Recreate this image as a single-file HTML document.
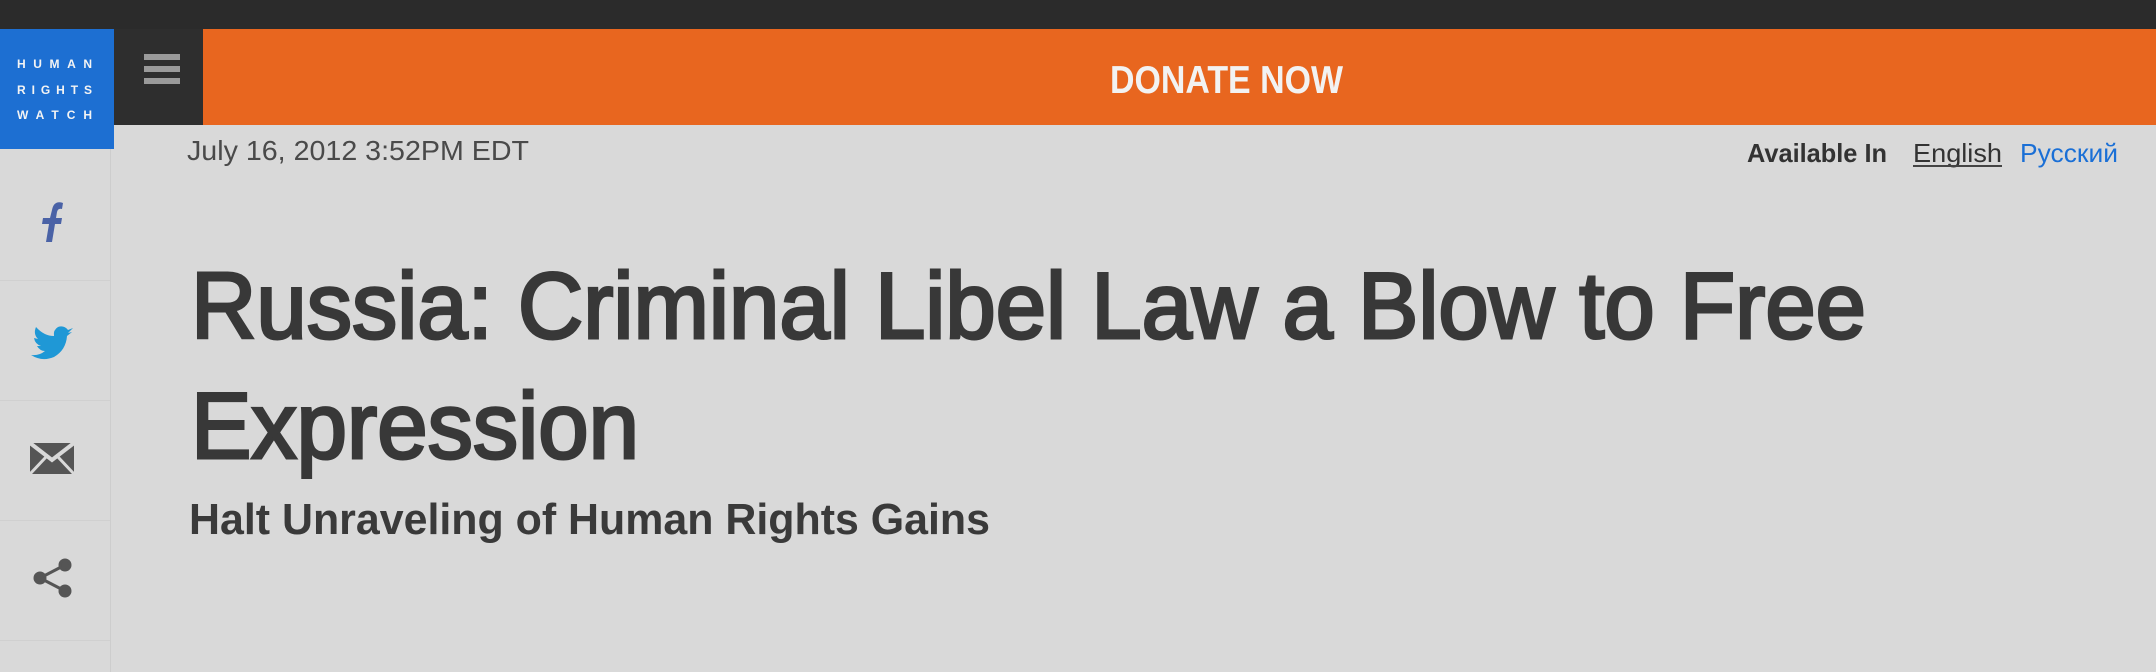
<!DOCTYPE html>
<html><head><meta charset="utf-8"><style>
html,body{margin:0;padding:0;}
body{width:2156px;height:672px;background:#d9d9d9;position:relative;overflow:hidden;font-family:"Liberation Sans",sans-serif;}
.a{position:absolute;}
svg{position:absolute;left:0;top:0;}
</style></head><body>
<div class="a" style="left:0;top:0;width:2156px;height:29px;background:#2b2b2b"></div>
<div class="a" style="left:0;top:29px;width:114px;height:120px;background:#1d6fd2"></div>
<div class="a" style="left:114px;top:29px;width:89px;height:96px;background:#2e2e2e"></div>
<div class="a" style="left:203px;top:29px;width:1953px;height:96px;background:#e8661f"></div>
<div class="a" style="left:144px;top:54px;width:36px;height:6px;background:#9a9a9a"></div>
<div class="a" style="left:144px;top:66px;width:36px;height:6px;background:#9a9a9a"></div>
<div class="a" style="left:144px;top:78px;width:36px;height:6px;background:#9a9a9a"></div>
<div class="a" style="left:110px;top:149px;width:1px;height:523px;background:#cdcdcd"></div>
<div class="a" style="left:0;top:280px;width:110px;height:1px;background:#d0d0d0"></div>
<div class="a" style="left:0;top:400px;width:110px;height:1px;background:#d0d0d0"></div>
<div class="a" style="left:0;top:520px;width:110px;height:1px;background:#d0d0d0"></div>
<div class="a" style="left:0;top:640px;width:110px;height:1px;background:#d0d0d0"></div>
<svg width="2156" height="672" xmlns="http://www.w3.org/2000/svg" font-family="Liberation Sans, sans-serif">
<g fill="#f4f4f4" font-size="12" font-weight="bold">
<text x="17" y="68" textLength="75" lengthAdjust="spacing">HUMAN</text>
<text x="17" y="94" textLength="75" lengthAdjust="spacing">RIGHTS</text>
<text x="17" y="119" textLength="75" lengthAdjust="spacing">WATCH</text>
</g>
<text x="1110" y="93" font-size="39" font-weight="bold" fill="#f2f2f2" textLength="233" lengthAdjust="spacingAndGlyphs">DONATE NOW</text>
<text x="187" y="160" font-size="28" fill="#4a4a4a" textLength="342" lengthAdjust="spacingAndGlyphs">July 16, 2012 3:52PM EDT</text>
<text x="1747" y="162" font-size="26" font-weight="bold" fill="#333" textLength="140" lengthAdjust="spacingAndGlyphs">Available In</text>
<text x="1913" y="162" font-size="26" fill="#333" textLength="89" lengthAdjust="spacingAndGlyphs">English</text>
<rect x="1913" y="165" width="89" height="2" fill="#444"/>
<text x="2020" y="162" font-size="26" fill="#1a6fd6" textLength="98" lengthAdjust="spacingAndGlyphs">Русский</text>
<g fill="#383838" stroke="#383838" stroke-width="3" font-size="94">
<text x="191" y="338" textLength="1675" lengthAdjust="spacingAndGlyphs">Russia: Criminal Libel Law a Blow to Free</text>
<text x="191" y="458" textLength="448" lengthAdjust="spacingAndGlyphs">Expression</text>
</g>
<text x="189" y="534" font-size="44" font-weight="bold" fill="#3a3a3a" textLength="801" lengthAdjust="spacingAndGlyphs">Halt Unraveling of Human Rights Gains</text>
<!-- facebook -->
<path d="M63 203 Q54 200 52 210 L50 218 L43 218 L42 224 L49 224 L46 242 L52 242 L55 224 L61 224 L62 218 L56 218 L57 212 Q58 208 62 209 Z" fill="#4a62a6"/>
<!-- twitter -->
<path d="M73 328 L68 330 Q64 325 58 327 Q53 330 54 336 Q44 336 36 327 Q33 334 38 339 L34 338 Q35 344 41 346 L37 346 Q40 351 45 351 Q39 356 31 355 Q42 362 54 357 Q66 350 67 336 L72 332 L68 333 Z" fill="#1f98d6"/>
<!-- mail -->
<rect x="30" y="443" width="44" height="31" fill="#555"/>
<path d="M30 443 L52 460 L74 443" stroke="#d9d9d9" stroke-width="4" fill="none"/>
<path d="M30 474 L46 457 M74 474 L58 457" stroke="#d9d9d9" stroke-width="3" fill="none"/>
<!-- share -->
<g stroke="#555" stroke-width="3" fill="#555">
<line x1="40" y1="578" x2="65" y2="565"/><line x1="40" y1="578" x2="65" y2="591"/>
<circle cx="40" cy="578" r="5"/><circle cx="65" cy="565" r="5"/><circle cx="65" cy="591" r="5"/>
</g>
</svg>
</body></html>
